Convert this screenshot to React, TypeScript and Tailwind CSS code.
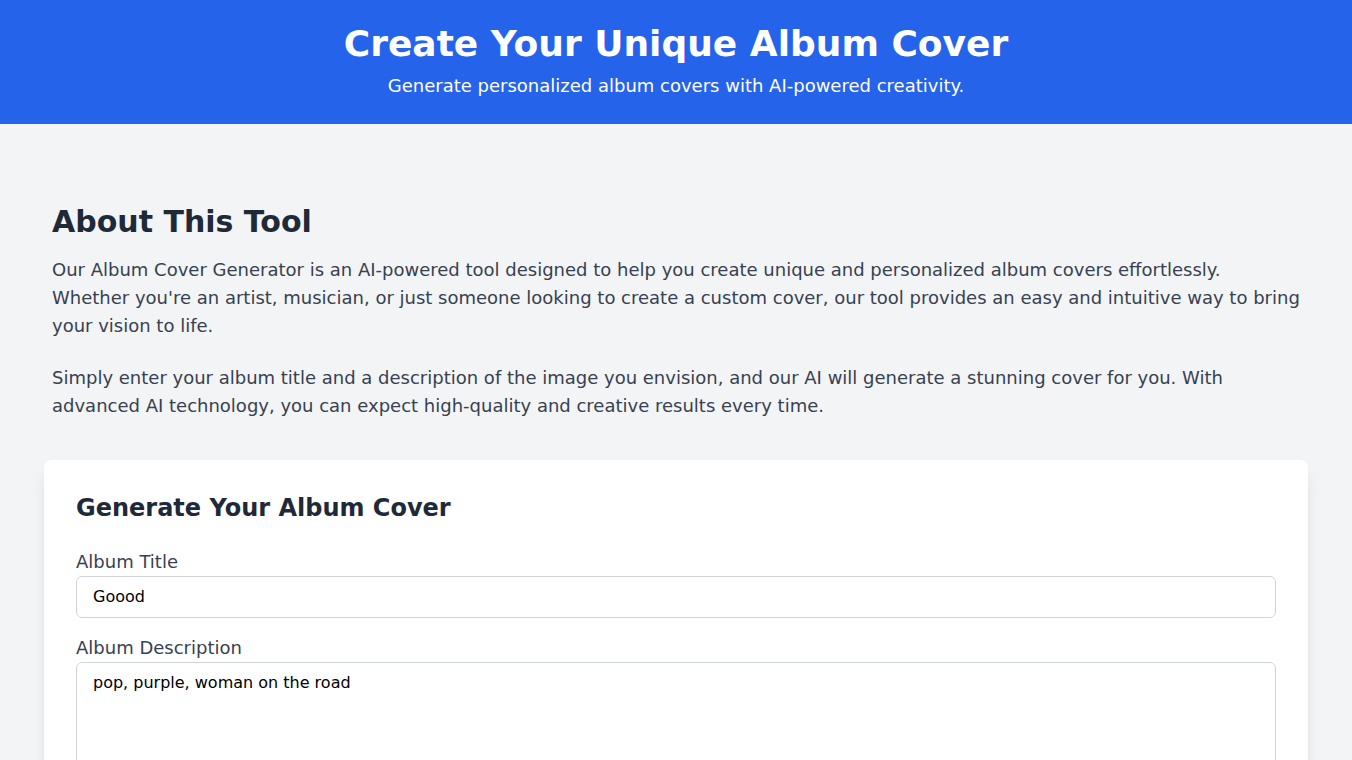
import { useState } from "react";

export default function App() {
    const [title, setTitle] = useState("Goood");
    const [description, setDescription] = useState("pop, purple, woman on the road");

    return (
        <div className="min-h-screen bg-[#f3f4f6] font-['DejaVu_Sans',sans-serif]">
            <header className="bg-[#2563eb] py-6 text-center text-white">
                <h1 className="text-4xl font-bold">Create Your Unique Album Cover</h1>
                <p className="mt-2 text-lg">Generate personalized album covers with AI-powered creativity.</p>
            </header>

            <main className="max-w-7xl mx-auto px-2 pt-[80px]">
                {/* About */}
                <section className="px-2 mb-10">
                    <h2 className="text-3xl font-bold text-[#1f2937] mb-4">About This Tool</h2>
                    <p className="text-lg leading-7 text-[#374151] mb-6">
                        Our Album Cover Generator is an AI-powered tool designed to help you create unique and personalized album covers effortlessly. Whether you're an artist, musician, or just someone looking to create a custom cover, our tool provides an easy and intuitive way to bring your vision to life.
                    </p>
                    <p className="text-lg leading-7 text-[#374151]">
                        Simply enter your album title and a description of the image you envision, and our AI will generate a stunning cover for you. With advanced AI technology, you can expect high-quality and creative results every time.
                    </p>
                </section>

                {/* Form */}
                <section className="bg-white rounded-lg shadow-lg p-8">
                    <h2 className="text-2xl font-bold text-[#1f2937] mb-6">Generate Your Album Cover</h2>
                    <form onSubmit={(e) => e.preventDefault()}>
                        <div className="mb-4">
                            <label htmlFor="title" className="block text-lg leading-7 text-[#374151]">
                                Album Title
                            </label>
                            <input
                                id="title"
                                type="text"
                                value={title}
                                onChange={(e) => setTitle(e.target.value)}
                                className="w-full border border-[#d1d5db] rounded-md px-4 py-2 text-base leading-6 text-black focus:outline-none"
                            />
                        </div>
                        <div className="mb-4">
                            <label htmlFor="description" className="block text-lg leading-7 text-[#374151]">
                                Album Description
                            </label>
                            <textarea
                                id="description"
                                rows={5}
                                value={description}
                                onChange={(e) => setDescription(e.target.value)}
                                className="w-full border border-[#d1d5db] rounded-md px-4 py-2 text-base leading-6 text-black resize-none focus:outline-none"
                            />
                        </div>
                    </form>
                </section>
            </main>
        </div>
    );
}
